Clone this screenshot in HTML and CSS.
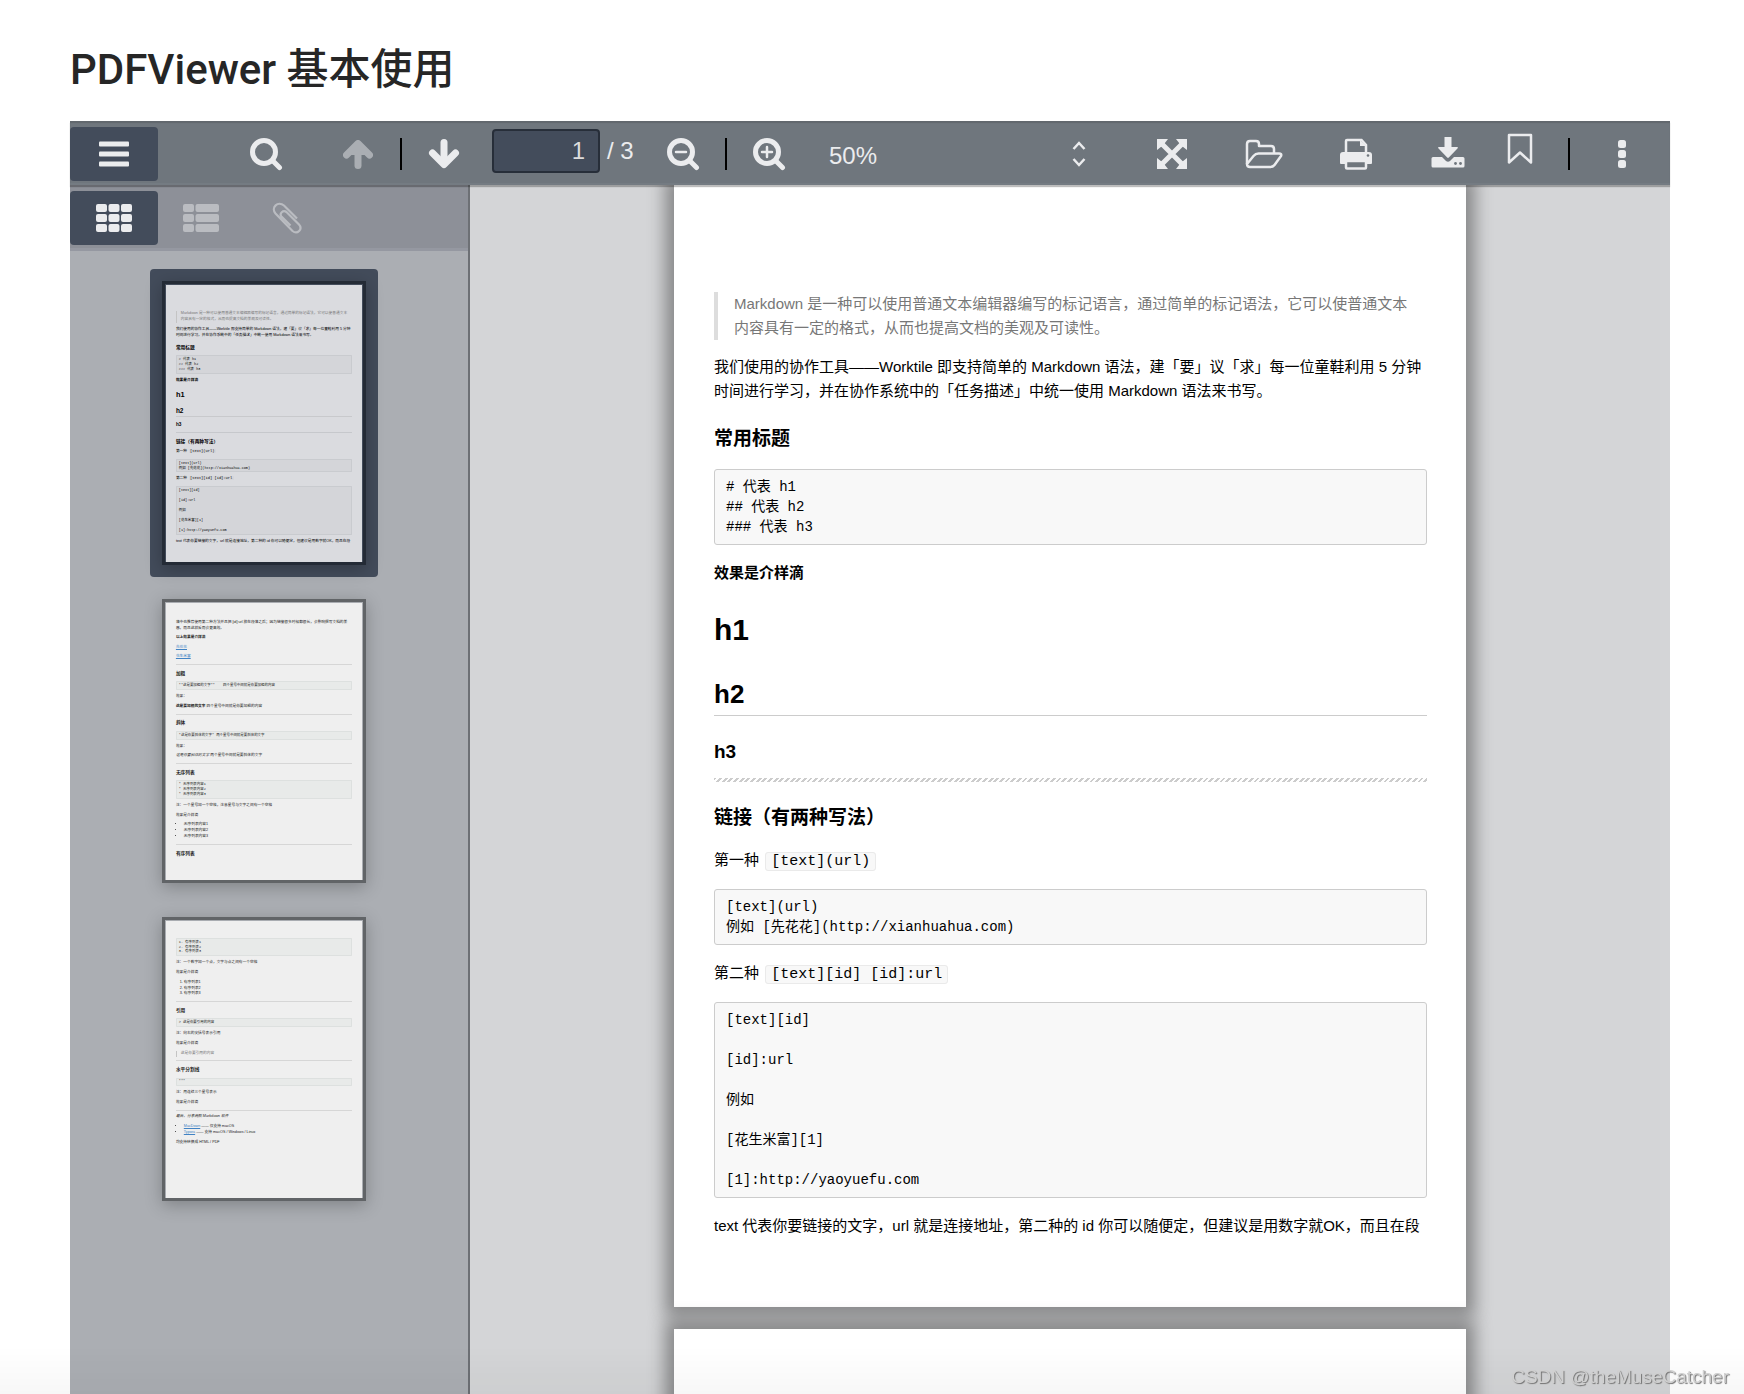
FILE: index.html
```html
<!DOCTYPE html>
<html lang="zh-CN">
<head>
<meta charset="utf-8">
<title>PDFViewer 基本使用</title>
<link rel="stylesheet" href="styles.css">
</head>
<body>
<h1 class="title">PDFViewer 基本使用</h1>
<div class="viewer">
  <header class="toolbar">
    <button class="btn btn-wide btn-on" type="button" aria-label="切换侧栏">
      <svg width="30" height="26" viewBox="0 0 30 26"><g fill="currentColor"><rect y="0.5" width="30" height="5" rx="1"/><rect y="10.5" width="30" height="5" rx="1"/><rect y="20.5" width="30" height="5" rx="1"/></g></svg>
    </button>
    <button class="btn btn-wide btn-find" type="button" aria-label="查找">
      <svg width="34" height="34" viewBox="0 0 34 34"><g fill="none" stroke="currentColor" stroke-width="5" stroke-linecap="round"><circle cx="15" cy="15" r="11.5"/><path d="M24 24l6.500 6.500"/></g></svg>
    </button>
    <div class="pair">
      <button class="btn" type="button" aria-label="上一页" disabled>
        <svg width="32" height="32" viewBox="0 0 32 32"><g fill="none" stroke="currentColor" stroke-width="7" stroke-linecap="round" stroke-linejoin="round"><path d="M4.500 17L16 5.500 27.500 17"/><path d="M16 8v19.500"/></g><path d="M6 17L16 6l10 11z" fill="currentColor"/></svg>
      </button>
      <span class="sep"></span>
      <button class="btn" type="button" aria-label="下一页">
        <svg width="32" height="32" viewBox="0 0 32 32"><g fill="none" stroke="currentColor" stroke-width="7" stroke-linecap="round" stroke-linejoin="round"><path d="M4.500 15L16 26.500 27.500 15"/><path d="M16 24V4.500"/></g></svg>
      </button>
    </div>
    <label class="page-field"><input class="page-input" type="text" value="1" aria-label="页码"> / 3</label>
    <div class="pair">
      <button class="btn" type="button" aria-label="缩小">
        <svg width="34" height="34" viewBox="0 0 34 34"><g fill="none" stroke="currentColor" stroke-width="5" stroke-linecap="round"><circle cx="15" cy="15" r="11.500"/><path d="M24 24l6.500 6.500"/><path d="M10 15h10" stroke-width="2.500"/></g></svg>
      </button>
      <span class="sep"></span>
      <button class="btn" type="button" aria-label="放大">
        <svg width="34" height="34" viewBox="0 0 34 34"><g fill="none" stroke="currentColor" stroke-width="5" stroke-linecap="round"><circle cx="15" cy="15" r="11.500"/><path d="M24 24l6.500 6.500"/><path d="M10 15h10M15 10v10" stroke-width="2.500"/></g></svg>
      </button>
    </div>
    <div class="zoom">
      <select class="zoom-select" aria-label="缩放"><option>50%</option><option>75%</option><option>100%</option></select>
      <svg class="zoom-arrows" width="14" height="26" viewBox="0 0 14 26"><path d="M1.500 8L7 2l5.500 6M1.500 18L7 24l5.500-6" fill="none" stroke="currentColor" stroke-width="2.500"/></svg>
    </div>
    <div class="actions">
      <button class="btn btn-wide" type="button" aria-label="全屏">
        <svg width="32" height="32" viewBox="0 0 32 32"><path d="M6 6l20 20M26 6L6 26" stroke="currentColor" stroke-width="5"/><path d="M1 1h11L8.500 5.500l0 3-3 0L1 12zM31 1v11l-4.500-3.500-3 0 0-3L20 1zM1 31V20l4.500 3.500 3 0 0 3L12 31zM31 31H20l3.500-4.500 0-3 3 0L31 20z" fill="currentColor"/></svg>
      </button>
      <button class="btn btn-wide" type="button" aria-label="打开">
        <svg width="38" height="30" viewBox="0 0 38 30"><g fill="none" stroke="currentColor" stroke-width="2.500" stroke-linejoin="round"><path d="M2 25V5q0-3 3-3h6q3 0 3 3v2h12q3 0 3 3v4.500"/><path d="M2 25L8.500 17q2-2.500 5-2.500H34q3 0 2 2.500l-6.500 9Q28 28 25 28H5q-3 0-3-3z"/></g></svg>
      </button>
      <button class="btn btn-wide" type="button" aria-label="打印">
        <svg width="34" height="32" viewBox="0 0 34 32"><path d="M7 17V3q0-1 1-1h14.500L27 7v10" fill="none" stroke="currentColor" stroke-width="2.500"/><path d="M21 2v6h6z" fill="currentColor"/><path d="M4 14h26q3 0 3 3v8q0 1-1 1H2q-1 0-1-1v-8q0-3 3-3z" fill="currentColor"/><rect x="7" y="23" width="20" height="7.500" rx="1" fill="#6f767d" stroke="currentColor" stroke-width="2.500"/><circle cx="29" cy="17.500" r="1.300" fill="#6f767d"/></svg>
      </button>
      <button class="btn btn-wide btn-save" type="button" aria-label="下载">
        <svg width="34" height="32" viewBox="0 0 34 32"><path d="M13.500 1h7v10H26q1.500 0 .7 1.200L17.800 21.500q-.8.800-1.600 0L7.300 12.200Q6.500 11 8 11h5.500z" fill="currentColor"/><path d="M2 21h9l4 4q2 1.500 4 0l4-4h9q1.500 0 1.500 1.500V30q0 1.500-1.500 1.500H2Q.5 31.500.5 30v-7.500Q.5 21 2 21z" fill="currentColor"/><circle cx="24.500" cy="27.500" r="1.400" fill="#6f767d"/><circle cx="29.500" cy="27.500" r="1.400" fill="#6f767d"/></svg>
      </button>
      <button class="btn btn-mark" type="button" aria-label="书签">
        <svg width="26" height="32" viewBox="0 0 26 32"><path d="M2 2h22v27.500L13 19.500 2 29.500z" fill="none" stroke="currentColor" stroke-width="2.500" stroke-linejoin="round"/></svg>
      </button>
      <span class="sep"></span>
      <button class="btn btn-wide btn-more" type="button" aria-label="更多">
        <svg width="8" height="30" viewBox="0 0 8 30"><g fill="currentColor"><rect y="1" width="8" height="8" rx="2.500"/><rect y="11" width="8" height="8" rx="2.500"/><rect y="21" width="8" height="8" rx="2.500"/></g></svg>
      </button>
    </div>
  </header>

  <div class="main">
    <aside class="sidebar">
      <div class="side-bar">
        <button class="btn btn-wide btn-on" type="button" aria-label="缩略图">
          <svg width="36" height="30" viewBox="0 0 36 30"><g fill="currentColor"><rect y="1" width="11" height="8" rx="2"/><rect x="12.500" y="1" width="11" height="8" rx="2"/><rect x="25" y="1" width="11" height="8" rx="2"/><rect y="11" width="11" height="8" rx="2"/><rect x="12.500" y="11" width="11" height="8" rx="2"/><rect x="25" y="11" width="11" height="8" rx="2"/><rect y="21" width="11" height="8" rx="2"/><rect x="12.500" y="21" width="11" height="8" rx="2"/><rect x="25" y="21" width="11" height="8" rx="2"/></g></svg>
        </button>
        <button class="btn" type="button" aria-label="大纲" disabled>
          <svg width="36" height="30" viewBox="0 0 36 30"><g fill="currentColor"><rect y="1" width="11" height="8" rx="2"/><rect x="12.500" y="1" width="23.500" height="8" rx="2"/><rect y="11" width="11" height="8" rx="2"/><rect x="12.500" y="11" width="23.500" height="8" rx="2"/><rect y="21" width="11" height="8" rx="2"/><rect x="12.500" y="21" width="23.500" height="8" rx="2"/></g></svg>
        </button>
        <button class="btn" type="button" aria-label="附件" disabled>
          <svg width="30" height="32" viewBox="0 0 30 32"><path d="M25 16.500L12 3.500C6-1.500-1.500 5.500 3.500 11.500L20.500 29C25.500 33 31 27 27 22.500L14.500 10C11 7.500 7 11.500 9.500 14.500L18.500 23.500" fill="none" stroke="currentColor" stroke-width="2.200"/></svg>
        </button>
      </div>
      <div class="thumbs">
        <div class="thumb thumb-on"><div class="thumb-frame"><div class="doc doc-first">
          <blockquote>Markdown 是一种可以使用普通文本编辑器编写的标记语言，通过简单的标记语法，它可以使普通文本内容具有一定的格式，从而也提高文档的美观及可读性。</blockquote>
          <p>我们使用的协作工具——Worktile 即支持简单的 Markdown 语法，建「要」议「求」每一位童鞋利用 5 分钟时间进行学习，并在协作系统中的「任务描述」中统一使用 Markdown 语法来书写。</p>
          <h4>常用标题</h4>
          <pre># 代表 h1
## 代表 h2
### 代表 h3</pre>
          <p><strong>效果是介样滴</strong></p>
          <h1>h1</h1>
          <h2>h2</h2>
          <h3>h3</h3>
          <hr>
          <h4>链接（有两种写法）</h4>
          <p>第一种 <code>[text](url)</code></p>
          <pre>[text](url)
例如 [先花花](http://xianhuahua.com)</pre>
          <p>第二种 <code>[text][id] [id]:url</code></p>
          <pre>[text][id]

[id]:url

例如

[花生米富][1]

[1]:http://yaoyuefu.com</pre>
          <p>text 代表你要链接的文字，url 就是连接地址，第二种的 id 你可以随便定，但建议是用数字就OK，而且在段</p>
        </div></div></div>

        <div class="thumb"><div class="thumb-frame"><div class="doc">
          <p>落中也推荐使用第二种方法并且把 [id]:url 放在段落之后；因为链接很多时候都很长，会影响撰写文档的美感，而且这样反而会更高效。</p>
          <p><strong>以上效果是介样滴</strong></p>
          <p><a href="#">先花花</a></p>
          <p><a href="#">花生米富</a></p>
          <hr>
          <h4>加粗</h4>
          <pre>**这是要加粗的文字**    四个星号中间就是你要加粗的内容</pre>
          <p>效果：</p>
          <p><strong>这是要加粗的文字</strong> 四个星号中间就是你要加粗的内容</p>
          <hr>
          <h4>斜体</h4>
          <pre>*这是你要斜体的文字* 两个星号中间就是要斜体的文字</pre>
          <p>效果：</p>
          <p><em>这是你要斜体的文字</em> 两个星号中间就是要斜体的文字</p>
          <hr>
          <h4>无序列表</h4>
          <pre>* 无序列表内容1
* 无序列表内容2
* 无序列表内容3</pre>
          <p>注：一个星号加一个空格，注意星号与文字之间有一个空格</p>
          <p>效果是介样滴</p>
          <ul><li>无序列表内容1</li><li>无序列表内容2</li><li>无序列表内容3</li></ul>
          <hr>
          <h4>有序列表</h4>
        </div></div></div>

        <div class="thumb"><div class="thumb-frame"><div class="doc">
          <pre>1. 有序列表1
2. 有序列表2
3. 有序列表3</pre>
          <p>注：一个数字加一个点，文字与点之间有一个空格</p>
          <p>效果是介样滴</p>
          <ol><li>有序列表1</li><li>有序列表2</li><li>有序列表3</li></ol>
          <hr>
          <h4>引用</h4>
          <pre>&gt; 这是你要引用的内容</pre>
          <p>注：向右的尖括号表示引用</p>
          <p>效果是介样滴</p>
          <blockquote>这是你要引用的内容</blockquote>
          <hr>
          <h4>水平分割线</h4>
          <pre>***</pre>
          <p>注：用连续三个星号表示</p>
          <p>效果是介样滴</p>
          <hr>
          <p><em>最后，分享两款 Markdown 软件</em></p>
          <ul><li><a href="#">MacDown</a> —— 仅支持 macOS</li><li><a href="#">Typora</a> —— 支持 macOS / Windows / Linux</li></ul>
          <p>均支持转换成 HTML / PDF</p>
        </div></div></div>
      </div>
    </aside>

    <main class="pages">
      <article class="doc doc-first page">
        <blockquote>Markdown 是一种可以使用普通文本编辑器编写的标记语言，通过简单的标记语法，它可以使普通文本内容具有一定的格式，从而也提高文档的美观及可读性。</blockquote>
        <p>我们使用的协作工具——Worktile 即支持简单的 Markdown 语法，建「要」议「求」每一位童鞋利用 5 分钟时间进行学习，并在协作系统中的「任务描述」中统一使用 Markdown 语法来书写。</p>
        <h4>常用标题</h4>
        <pre># 代表 h1
## 代表 h2
### 代表 h3</pre>
        <p><strong>效果是介样滴</strong></p>
        <h1>h1</h1>
        <h2>h2</h2>
        <h3>h3</h3>
        <hr>
        <h4>链接（有两种写法）</h4>
        <p>第一种 <code>[text](url)</code></p>
        <pre>[text](url)
例如 [先花花](http://xianhuahua.com)</pre>
        <p>第二种 <code>[text][id] [id]:url</code></p>
        <pre>[text][id]

[id]:url

例如

[花生米富][1]

[1]:http://yaoyuefu.com</pre>
        <p>text 代表你要链接的文字，url 就是连接地址，第二种的 id 你可以随便定，但建议是用数字就OK，而且在段</p>
      </article>
      <article class="doc page"></article>
    </main>
  </div>
</div>
<div class="fade"></div>
<div class="watermark">CSDN @theMuseCatcher</div>
</body>
</html>
```

FILE: styles.css
```css
* { box-sizing: border-box; }

body {
  display: flex;
  flex-direction: column;
  height: 100vh;
  margin: 0;
  padding: 46px 74px 0 70px;
  overflow: hidden;
  background: #fff;
  font-family: "Liberation Sans", "Noto Sans CJK SC", sans-serif;
}

.title {
  margin: 0 0 27px;
  color: #262626;
  font: 500 42px/48px Roboto, "Noto Sans CJK SC", sans-serif;
}

.viewer {
  display: flex;
  flex: 1;
  flex-direction: column;
  min-height: 0;
  background: #d4d5d7;
}

/* Toolbar */
.toolbar {
  position: relative;
  z-index: 2;
  display: flex;
  flex: none;
  align-items: center;
  height: 64px;
  padding: 2px 4px 0 0;
  background: #6f767d;
  box-shadow: inset 0 2px 1px rgba(0, 0, 0, .12), inset 0 -2px 0 rgba(255, 255, 255, .04), 0 2px 1px rgba(0, 0, 0, .26);
  color: #ebecee;
  font-size: 24px;
}

.btn {
  display: flex;
  flex: none;
  align-items: center;
  justify-content: center;
  width: 86px;
  height: 54px;
  padding: 0;
  border: 0;
  border-radius: 4px;
  background: none;
  color: inherit;
}
.btn svg { display: block; }
.btn:disabled { opacity: .48; }
.btn-wide { width: 88px; }
.btn-on { background: #434c5b; }
.btn-find { margin: 0 5px 0 64px; }

.pair { display: flex; align-items: center; }
.sep { flex: none; width: 2px; height: 32px; background: #000; }
.pair .sep { margin: 0 -1px; }

.page-field {
  display: flex;
  align-items: center;
  gap: 7px;
  width: 148px;
  margin: 0 0 6px 5px;
  white-space: nowrap;
}
.page-input {
  width: 108px;
  height: 44px;
  padding: 0 13px 0 15px;
  border: 2px solid #272e39;
  border-radius: 4px;
  background: #434c5b;
  color: #dcdcdc;
  font: inherit;
  text-align: right;
}

.zoom {
  display: grid;
  align-items: center;
  flex: 0 1 276px;
  margin-left: 8px;
}
.zoom-select {
  grid-area: 1 / 1;
  width: 100%;
  height: 54px;
  padding: 2px 9px 0;
  border: 0;
  background: none;
  color: inherit;
  font: inherit;
  appearance: none;
}
.zoom-arrows {
  grid-area: 1 / 1;
  justify-self: end;
  margin-right: 10px;
  pointer-events: none;
}

.actions {
  display: flex;
  align-items: center;
  gap: 4px;
  margin-left: auto;
}
.btn-save { padding-bottom: 4px; }
.btn-mark { width: 48px; padding-bottom: 10px; }
.actions .sep { margin: 0 4px 0 20px; }

/* Sidebar */
.main { display: flex; flex: 1; min-height: 0; }

.sidebar {
  display: flex;
  flex: none;
  flex-direction: column;
  width: 400px;
  border-right: 2px solid #6d7075;
  background: #abaeb3;
}
.side-bar {
  display: flex;
  flex: none;
  align-items: center;
  height: 66px;
  padding-top: 2px;
  border-bottom: 3px solid #9598a1;
  background: #8d9098;
  color: #ebecee;
}
.thumbs {
  display: flex;
  flex: 1;
  flex-direction: column;
  align-items: center;
  gap: 10px;
  min-height: 0;
  padding: 18px 10px 0 0;
  overflow: hidden;
}
.thumb {
  flex: none;
  padding: 12px;
  border-radius: 4px;
}
.thumb-on { background: #434c5b; }
.thumb-frame {
  width: 204px;
  height: 284px;
  padding: 1px;
  overflow: hidden;
  border: 3px solid #616467;
  background: #a9acb1;
  box-shadow: 0 4px 16px rgba(0, 0, 0, .25);
}
.thumb-on .thumb-frame { border-color: #242b36; background: #434c5b; }

/* Pages */
.pages {
  display: flex;
  flex: 1;
  flex-direction: column;
  align-items: center;
  gap: 22px;
  min-width: 0;
  overflow: hidden;
}
.page {
  position: relative;
  flex: none;
  box-shadow: 0 0 16px 9px rgba(0, 0, 0, .36);
}

/* Document */
.doc {
  width: 792px;
  height: 1122px;
  padding: 67px 39px 0 40px;
  background: #fff;
  color: #000;
  font-size: 15px;
  line-height: 24px;
}
.doc-first { padding-top: 107px; }
.doc > :first-child { margin-top: 0; }
.doc p, .doc ul, .doc ol, .doc blockquote { margin: 15px 0; }
.doc ul, .doc ol { padding-left: 32px; }
.doc blockquote {
  padding: 0 16px;
  border-left: 4px solid #ddd;
  color: #777;
}
.doc a { color: #4183c4; }
.doc h1, .doc h2, .doc h3, .doc h4 { font-weight: 700; }
.doc h1 { margin: 27px 0; font-size: 30px; line-height: 36px; }
.doc h2 {
  margin: 30px 0 24px;
  padding-bottom: 5px;
  border-bottom: 1px solid #ccc;
  font-size: 26px;
  line-height: 32px;
}
.doc h3 { margin: 24px 0 14px; font-size: 19px; }
.doc h4 { margin: 24px 0 18px; font-size: 19px; }
.doc hr {
  height: 4px;
  margin: 14px 0;
  border: 0;
  background: repeating-linear-gradient(135deg, #ccc 0 2px, #fff 2px 4px);
}
.doc pre, .doc code {
  border: 1px solid #ccc;
  border-radius: 3px;
  background: #f8f8f8;
  font-family: "Liberation Mono", "Noto Sans CJK SC", monospace;
}
.doc pre {
  margin: 15px 0 16px;
  padding: 7px 11px;
  font-size: 14px;
  line-height: 20px;
}
.doc code {
  margin: 0 2px;
  padding: 0 5px;
  border-color: #eaeaea;
  font-size: 15px;
}

/* Thumbnails show the same document, reduced; hairlines become soft outlines */
.thumb .doc { zoom: .2475; background: #efefef; color: #222; }
.thumb .doc blockquote { border-color: #c4c4c4; color: #777; }
.thumb .doc hr { background: #d6d6d6; }
.thumb .doc h2 { padding-bottom: 6px; border: 0; box-shadow: 0 4px #c8c9cc; }
.thumb .doc pre {
  padding: 8px 12px;
  border: 0;
  background: #e8eae9;
  box-shadow: inset 0 0 0 4px #dde0df;
}
.thumb .doc code { padding: 0 6px; border: 0; background: #e8eae9; }
.thumb-on .doc { background: #dadbdf; color: #000; }
.thumb-on .doc pre { background: #d4d5d9; box-shadow: inset 0 0 0 4px #c9cbcf; }
.thumb-on .doc code { background: #d4d5d9; }
.thumb-on .doc hr { background: #c6c8cc; }

/* Overlays */
.fade {
  position: fixed;
  right: 0;
  bottom: 0;
  left: 0;
  height: 48px;
  background: linear-gradient(transparent, rgba(0, 0, 0, .03));
  pointer-events: none;
}
.watermark {
  position: fixed;
  right: 15px;
  bottom: 6px;
  color: #d0d0d0;
  font-size: 19px;
  line-height: 22px;
  text-shadow: 1px 1px 1px #707070;
}
```
